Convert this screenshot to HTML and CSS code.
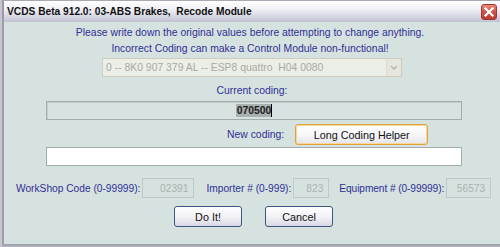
FILE: index.html
```html
<!DOCTYPE html>
<html>
<head>
<meta charset="utf-8">
<link rel="stylesheet" href="styles.css">
</head>
<body>
<div class="window">
  <div class="titlebar">
    <span class="title">VCDS Beta 912.0: 03-ABS Brakes,&nbsp; Recode Module</span>
    <span class="close">
      <svg width="10" height="10" viewBox="0 0 10 10"><path d="M1.5 1.5 L8.5 8.5 M8.5 1.5 L1.5 8.5" stroke="#fff" stroke-width="2.2" stroke-linecap="square"/></svg>
    </span>
  </div>
  <div class="client">
    <div class="note note-1">Please write down the original values before attempting to change anything.</div>
    <div class="note">Incorrect Coding can make a Control Module non-functional!</div>
    <div class="combo">
      <span class="combo-text">0 -- 8K0 907 379 AL -- ESP8 quattro&nbsp; H04 0080</span>
      <span class="combo-btn">
        <svg width="8" height="5" viewBox="0 0 8 5"><path d="M1 1 L4 4 L7 1" fill="none" stroke="#b4b4ac" stroke-width="1.3"/></svg>
      </span>
    </div>
    <div class="label-center">Current coding:</div>
    <div class="field current"><span class="sel">070500</span><span class="caret"></span></div>
    <div class="new-row">
      <span class="label">New coding:</span>
      <span class="btn btn-default">Long Coding Helper</span>
    </div>
    <div class="field new"></div>
    <div class="codes">
      <span class="label">WorkShop Code (0-99999):</span>
      <span class="small w-ws">02391</span>
      <span class="label l-imp">Importer # (0-999):</span>
      <span class="small w-imp">823</span>
      <span class="label l-eq">Equipment # (0-99999):</span>
      <span class="small w-eq">56573</span>
    </div>
    <div class="buttons">
      <span class="btn btn-act">Do It!</span>
      <span class="btn btn-act">Cancel</span>
    </div>
  </div>
</div>
</body>
</html>
```

FILE: styles.css
```css
html, body {
  margin: 0;
  padding: 0;
  background: #ffffff;
}
.window {
  width: 500px;
  height: 247px;
  box-sizing: border-box;
  border-left: 2px solid #c6c6ce;
  border-bottom: 1px solid #b8b8c0;
  display: flex;
  flex-direction: column;
  font-family: "Liberation Sans", Arial, sans-serif;
  overflow: hidden;
}
.titlebar {
  height: 22px;
  box-sizing: border-box;
  border-top: 1px solid #a9a9b4;
  border-left: 2px solid #9a9aa8;
  background: linear-gradient(to bottom, #ffffff 0%, #f2f2f7 35%, #d6d6e4 75%, #c0c0d2 100%);
  display: flex;
  align-items: center;
  justify-content: space-between;
  padding: 0 3px 0 3px;
}
.title {
  font-weight: bold;
  font-size: 10.2px;
  color: #111;
  white-space: nowrap;
}
.close {
  width: 16px;
  height: 16px;
  box-sizing: border-box;
  border: 1px solid #9a3a30;
  border-radius: 3px;
  background: linear-gradient(to bottom, #e98a78 0%, #d2574a 45%, #bd3b2e 100%);
  display: flex;
  align-items: center;
  justify-content: center;
  margin-top: 1px;
}
.close svg { display: block; }
.client {
  flex: 1;
  background: #d6e2e0;
  border-left: 2px solid #9c9caa;
  border-bottom: 2px solid #a4a4b0;
  display: flex;
  flex-direction: column;
  align-items: flex-start;
  font-size: 10.4px;
  color: #2f2f95;
  white-space: nowrap;
}
.note {
  width: 100%;
  text-align: center;
  line-height: 16px;
  padding-right: 4px;
  box-sizing: border-box;
}
.note-1 { margin-top: 3px; }
.combo {
  margin-top: 1px;
  margin-left: 98px;
  width: 300px;
  height: 19px;
  box-sizing: border-box;
  border: 1px solid #ccccc0;
  background: #eceee8;
  display: flex;
  align-items: center;
  justify-content: space-between;
}
.combo-text {
  color: #a9a9a2;
  padding-left: 3px;
}
.combo-btn {
  width: 14px;
  height: 17px;
  background: #e6e6de;
  border-left: 1px solid #dcdcd4;
  display: flex;
  align-items: center;
  justify-content: center;
}
.label-center {
  width: 100%;
  text-align: center;
  line-height: 16px;
  margin-top: 6px;
}
.field {
  margin-left: 42px;
  width: 416px;
  height: 19px;
  box-sizing: border-box;
  border: 1px solid #a2acac;
}
.current {
  margin-top: 2px;
  background: #d8e3e1;
  display: flex;
  align-items: center;
  justify-content: center;
  box-shadow: inset 1px 1px 0 #c4d0ce;
}
.sel {
  background: #a9b0b0;
  color: #1e1e1e;
  font-weight: bold;
  line-height: 13px;
  padding: 0 0 0 1px;
}
.caret {
  width: 1px;
  height: 13px;
  background: #000;
}
.new-row {
  margin-top: 4px;
  margin-left: 223px;
  display: flex;
  align-items: center;
  gap: 11px;
}
.label { flex-shrink: 0; }
.btn {
  box-sizing: border-box;
  display: flex;
  align-items: center;
  justify-content: center;
  color: #111;
  font-size: 10.8px;
  border-radius: 3px;
  flex-shrink: 0;
}
.btn-default {
  width: 133px;
  height: 21px;
  border: 1px solid #e2a23a;
  background: linear-gradient(to bottom, #ffffff 0%, #f7f7f9 50%, #e4e4ec 100%);
  box-shadow: inset 0 0 0 1px #f6d79c;
}
.new {
  margin-top: 2px;
  background: #ffffff;
}
.codes {
  margin-top: 12px;
  margin-left: 12px;
  display: flex;
  align-items: center;
  font-size: 10.2px;
}
.small {
  flex-shrink: 0;
  height: 20px;
  box-sizing: border-box;
  border: 1px solid #bec8c6;
  color: #a8b2b0;
  display: flex;
  align-items: center;
  justify-content: flex-end;
  padding-right: 5px;
  margin-left: 2px;
}
.w-ws { width: 52px; }
.w-imp { width: 36px; }
.w-eq { width: 45px; }
.l-imp { margin-left: 12px; }
.l-eq { margin-left: 10px; letter-spacing: -0.1px; }
.buttons {
  margin-top: 8px;
  margin-left: 170px;
  display: flex;
  gap: 23px;
}
.btn-act {
  width: 68px;
  height: 21px;
  border: 1px solid #3d5680;
  background: linear-gradient(to bottom, #ffffff 0%, #f2f2f6 50%, #d9d9e6 100%);
}
```
